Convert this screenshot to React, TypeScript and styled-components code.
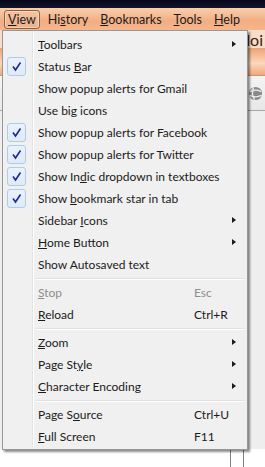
import React from "react";
import styled, { createGlobalStyle } from "styled-components";

const GlobalStyle = createGlobalStyle`
  html, body {
    margin: 0;
    padding: 0;
    background: #f0f0f0;
    overflow: hidden;
  }
  body {
    font-family: Lato, "Noto Sans", "DejaVu Sans", sans-serif;
  }
`;

const Page = styled.div`
  position: relative;
  width: 265px;
  height: 467px;
  display: flex;
  flex-direction: column;
  background: #ededed;
  overflow: hidden;
`;

const TitleStrip = styled.div`
  height: 8px;
  background: linear-gradient(#06061a, #14142a);
`;

const MenuBar = styled.div`
  height: 22px;
  display: flex;
  align-items: center;
  padding-left: 4px;
  background: linear-gradient(#f9cfae, #f3ad82 60%, #f5b68e);
  font-size: 12.5px;
  color: #1b1b1b;
`;

const BarItem = styled.div<{ $open?: boolean }>`
  height: 19px;
  line-height: 17px;
  box-sizing: border-box;
  padding: 0 3px;
  margin-right: 4px;
  border: 1px solid ${(p) => (p.$open ? "#8b6246" : "transparent")};
  border-radius: 3px;
  background: ${(p) => (p.$open ? "linear-gradient(#f4c3a0, #eeb08a)" : "none")};
  box-shadow: ${(p) => (p.$open ? "inset 0 0 0 1px rgba(255,230,210,0.6)" : "none")};
`;

const AddressRow = styled.div`
  height: 18px;
  display: flex;
  justify-content: flex-end;
  align-items: center;
  padding-right: 2px;
  background: #f7ddc8;
  border-bottom: 1px solid #d8a888;
  font-size: 16px;
  color: #3a2210;
`;

const ToolbarBand = styled.div`
  height: 26px;
  background: linear-gradient(#f2a576, #fbd7bd 55%, #f1a87c);
  border-bottom: 1px solid #c99878;
`;

const TabRow = styled.div`
  height: 34px;
  display: flex;
  justify-content: flex-end;
  align-items: center;
  padding-right: 2px;
  background: linear-gradient(#f4f4f4, #e8e8e8);
  border-bottom: 1px solid #a8a8a8;
`;

const Content = styled.div`
  flex: 1;
  display: flex;
  flex-direction: column;
  justify-content: flex-end;
  background: #eeeeee;
`;

const BottomStrip = styled.div`
  height: 18px;
  background: #ffffff;
  display: flex;
  padding-left: 230px;
  gap: 12px;
`;

const VLine = styled.div`
  width: 1px;
  background: #808080;
`;

const Menu = styled.div`
  position: absolute;
  left: 2px;
  top: 30px;
  width: 246px;
  box-sizing: border-box;
  padding: 2px;
  border: 1px solid #979797;
  background: #f0f0f0;
  box-shadow: 2px 2px 2px rgba(0, 0, 0, 0.45);
  font-size: 12px;
  color: #1b1b1b;
  overflow: hidden;

  &::before {
    content: "";
    position: absolute;
    top: 2px;
    bottom: 2px;
    left: 29px;
    width: 1px;
    background: #e2e3e3;
    box-shadow: 1px 0 0 #ffffff;
  }
`;

const Row = styled.div<{ $disabled?: boolean }>`
  position: relative;
  height: 22px;
  display: grid;
  grid-template-columns: 32px 1fr 37px 14px;
  align-items: center;
  color: ${(p) => (p.$disabled ? "#8d8d8d" : "#1b1b1b")};
`;

const Label = styled.span`
  padding-left: 1px;
  white-space: nowrap;
`;

const Shortcut = styled.span`
  white-space: nowrap;
`;

const CheckBox = styled.div`
  width: 19px;
  height: 19px;
  margin-left: 2px;
  box-sizing: border-box;
  border: 1px solid #aeccea;
  border-radius: 3px;
  background: linear-gradient(#eaf2fb, #dfeaf8);
  display: flex;
  align-items: center;
  justify-content: center;
`;

const Separator = styled.div`
  height: 6px;
  margin-left: 31px;
  display: flex;
  align-items: center;

  &::after {
    content: "";
    flex: 1;
    height: 1px;
    background: #e0e0e0;
    box-shadow: 0 1px 0 #ffffff;
  }
`;

const ArrowCell = styled.span`
  display: flex;
  align-items: center;
  padding-left: 1px;
`;

const Arrow = styled.span`
  display: block;
  width: 0;
  height: 0;
  border-top: 3.5px solid transparent;
  border-bottom: 3.5px solid transparent;
  border-left: 4px solid #1b1b1b;
`;

function Check() {
  return (
    <svg width="11" height="11" viewBox="0 0 11 11">
      <path d="M2 5.5 L4.5 9 L9.5 1.5" fill="none" stroke="#20279a" strokeWidth="1.6" />
    </svg>
  );
}

function Globe() {
  return (
    <svg width="15" height="15" viewBox="0 0 16 16">
      <circle cx="8" cy="8" r="7" fill="#8a8a8a" />
      <path d="M2 6 Q8 3 14 6 M1.5 10 Q8 13 14.5 10 M6 1.5 Q3 8 7 14.5" stroke="#eeeeee" strokeWidth="1.3" fill="none" />
      <circle cx="5" cy="5" r="2" fill="#d8d8d8" opacity="0.7" />
    </svg>
  );
}

type Item =
  | { sep: true }
  | {
      sep?: false;
      label: React.ReactNode;
      checked?: boolean;
      shortcut?: string;
      sub?: boolean;
      disabled?: boolean;
    };

const u = (s: string) => <u>{s}</u>;

const items: Item[] = [
  { label: <>{u("T")}oolbars</>, sub: true },
  { label: <>Status {u("B")}ar</>, checked: true },
  { label: "Show popup alerts for Gmail" },
  { label: "Use big icons" },
  { label: "Show popup alerts for Facebook", checked: true },
  { label: "Show popup alerts for Twitter", checked: true },
  { label: <>Show In{u("d")}ic dropdown in textboxes</>, checked: true },
  { label: <>Show {u("b")}ookmark star in tab</>, checked: true },
  { label: <>Sidebar {u("I")}cons</>, sub: true },
  { label: <>{u("H")}ome Button</>, sub: true },
  { label: "Show Autosaved text" },
  { sep: true },
  { label: <>{u("S")}top</>, shortcut: "Esc", disabled: true },
  { label: <>{u("R")}eload</>, shortcut: "Ctrl+R" },
  { sep: true },
  { label: <>{u("Z")}oom</>, sub: true },
  { label: <>Page St{u("y")}le</>, sub: true },
  { label: <>{u("C")}haracter Encoding</>, sub: true },
  { sep: true },
  { label: <>Page S{u("o")}urce</>, shortcut: "Ctrl+U" },
  { label: <>{u("F")}ull Screen</>, shortcut: "F11" },
];

export default function App() {
  return (
    <>
      <GlobalStyle />
      <Page>
        <TitleStrip />
        <MenuBar>
          <BarItem $open>{u("V")}iew</BarItem>
          <BarItem>Hi{u("s")}tory</BarItem>
          <BarItem>{u("B")}ookmarks</BarItem>
          <BarItem>{u("T")}ools</BarItem>
          <BarItem>{u("H")}elp</BarItem>
        </MenuBar>
        <AddressRow>doi</AddressRow>
        <ToolbarBand />
        <TabRow>
          <Globe />
        </TabRow>
        <Content>
          <BottomStrip>
            <VLine />
            <VLine />
          </BottomStrip>
        </Content>

        <Menu>
          {items.map((it, i) =>
            it.sep ? (
              <Separator key={i} />
            ) : (
              <Row key={i} $disabled={it.disabled}>
                <span>{it.checked && <CheckBox><Check /></CheckBox>}</span>
                <Label>{it.label}</Label>
                <Shortcut>{it.shortcut}</Shortcut>
                <ArrowCell>{it.sub && <Arrow />}</ArrowCell>
              </Row>
            )
          )}
        </Menu>
      </Page>
    </>
  );
}
